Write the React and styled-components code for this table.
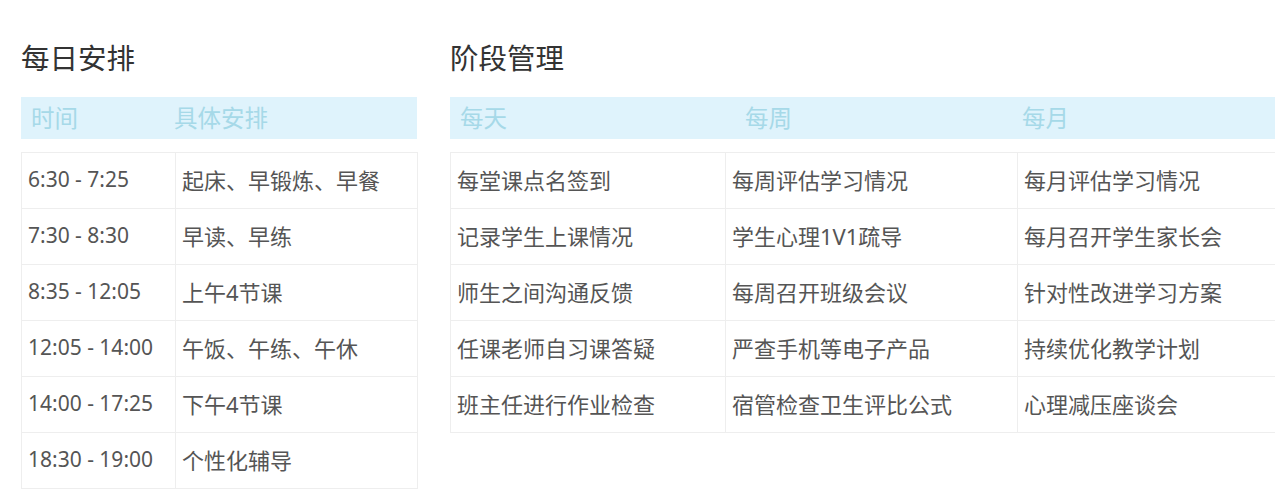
import React from "react";
import styled, { createGlobalStyle } from "styled-components";

const GlobalStyle = createGlobalStyle`
    body {
        margin: 0;
        background: #fff;
        font-family: "Noto Sans", "Noto Sans CJK SC", sans-serif;
        overflow: hidden;
    }
`

const Page = styled.div`
    display: flex;
    gap: 33px;
    padding: 36px 0 0 21px;
    width: 1275px;
    box-sizing: border-box;
`

const Panel = styled.section`
    display: flex;
    flex-direction: column;
    width: ${props => props.$width}px;
    flex-shrink: 0;
`

const Title = styled.h2`
    margin: 0;
    height: 61px;
    font-size: 28.5px;
    font-weight: 400;
    line-height: 44px;
    color: #333;
`

const HeadBar = styled.div`
    display: grid;
    grid-template-columns: ${props => props.$cols};
    height: 42px;
    align-items: center;
    background: #dff3fc;
    margin-bottom: 13px;
`

const HeadCell = styled.div`
    padding-left: 10px;
    padding-bottom: 2px;
    font-size: 23.5px;
    color: #a6d9e8;
`

const Table = styled.div`
    display: grid;
    grid-template-columns: ${props => props.$cols};
    border-top: 1px solid #eeeeee;
    border-left: 1px solid #eeeeee;
    width: ${props => props.$width}px;
`

const Cell = styled.div`
    height: 56px;
    box-sizing: border-box;
    display: flex;
    align-items: center;
    padding: 0 0 4px 6px;
    border-right: 1px solid #eeeeee;
    border-bottom: 1px solid #eeeeee;
    font-size: ${props => (props.$time ? "21px" : "22px")};
    color: #555;
    white-space: nowrap;
`

const daily = [
    ["6:30 - 7:25", "起床、早锻炼、早餐"],
    ["7:30 - 8:30", "早读、早练"],
    ["8:35 - 12:05", "上午4节课"],
    ["12:05 - 14:00", "午饭、午练、午休"],
    ["14:00 - 17:25", "下午4节课"],
    ["18:30 - 19:00", "个性化辅导"],
]

const stages = [
    ["每堂课点名签到", "每周评估学习情况", "每月评估学习情况"],
    ["记录学生上课情况", "学生心理1V1疏导", "每月召开学生家长会"],
    ["师生之间沟通反馈", "每周召开班级会议", "针对性改进学习方案"],
    ["任课老师自习课答疑", "严查手机等电子产品", "持续优化教学计划"],
    ["班主任进行作业检查", "宿管检查卫生评比公式", "心理减压座谈会"],
]

function App() {
    return (
        <>
            <GlobalStyle />
            <Page>
                <Panel $width={396}>
                    <Title>每日安排</Title>
                    <HeadBar $cols="143px 1fr">
                        <HeadCell>时间</HeadCell>
                        <HeadCell>具体安排</HeadCell>
                    </HeadBar>
                    <Table $cols="154px 1fr" $width={396}>
                        {daily.map(([time, plan]) => (
                            <React.Fragment key={time}>
                                <Cell $time>{time}</Cell>
                                <Cell>{plan}</Cell>
                            </React.Fragment>
                        ))}
                    </Table>
                </Panel>
                <Panel $width={825}>
                    <Title>阶段管理</Title>
                    <HeadBar $cols="285px 277px 1fr">
                        <HeadCell>每天</HeadCell>
                        <HeadCell>每周</HeadCell>
                        <HeadCell>每月</HeadCell>
                    </HeadBar>
                    <Table $cols="275px 292px 1fr" $width={825}>
                        {stages.map(row => row.map((text, i) => (
                            <Cell key={row[0] + i}>{text}</Cell>
                        )))}
                    </Table>
                </Panel>
            </Page>
        </>
    );
}

export default App;
